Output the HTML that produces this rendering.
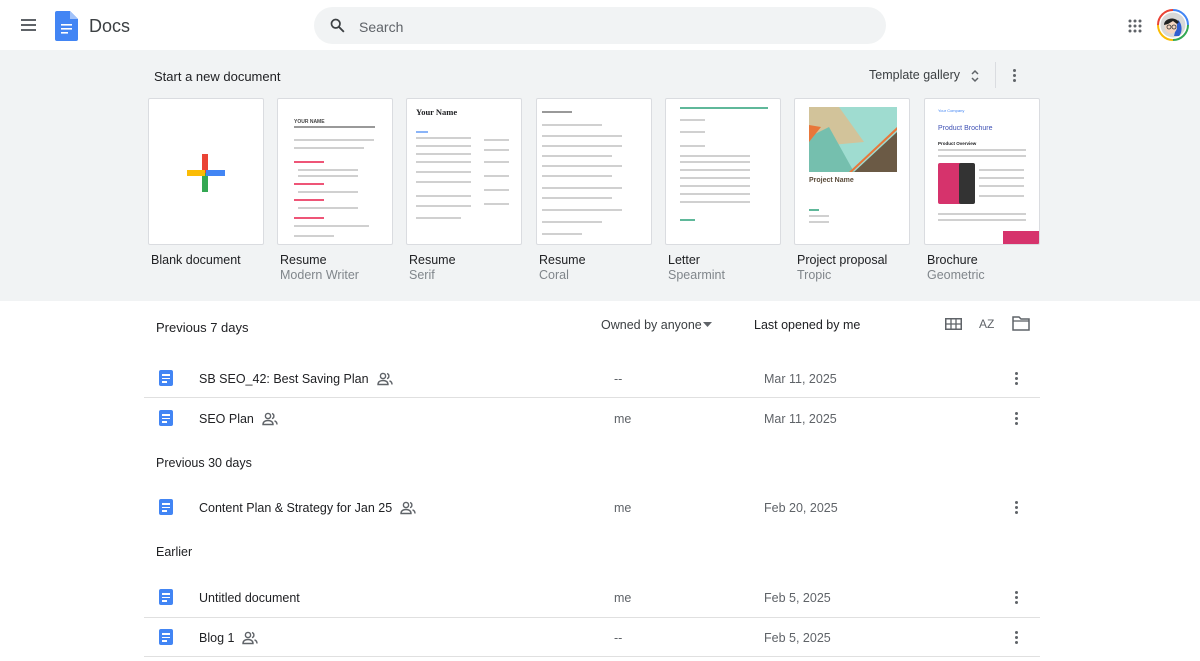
<!DOCTYPE html>
<html><head><meta charset="utf-8"><style>
*{box-sizing:border-box;margin:0;padding:0}
body{width:1200px;height:661px;overflow:hidden;background:#fff;font-family:"Liberation Sans",Arial,sans-serif;color:#202124;position:relative}
.a{position:absolute}
.band{left:0;top:50px;width:1200px;height:251px;background:#f1f3f4}
.card{position:absolute;top:98px;width:116px;height:147px;background:#fff;border:1px solid #dadce0;border-radius:2px;overflow:hidden}
.lbl{position:absolute;top:253px;font-size:12.5px;color:#202124}
.lbl span{display:block;color:#80868b;margin-top:1px}
.ln{position:absolute;height:1.5px;background:#d0d0d0}
.row{position:absolute;left:144px;width:896px;height:40px;font-size:12.5px}
.sep{position:absolute;left:144px;width:896px;height:1px;background:#e0e0e0}
.doc{position:absolute;left:15px;top:12px;width:14px;height:16px;background:#4285f4;border-radius:2px}
.doc i{position:absolute;left:3px;width:8px;height:1.5px;background:#fff}
.name{position:absolute;left:55px;top:14px}
.name svg{vertical-align:-3px;margin-left:8px}
.own{position:absolute;left:470px;top:14px;color:#5f6368}
.date{position:absolute;left:620px;top:14px;color:#5f6368}
.dots{position:absolute;left:871px;top:14px;width:3px}
.dots b{display:block;width:3px;height:3px;border-radius:50%;background:#5f6368;margin-bottom:2px}
.sec{position:absolute;left:156px;font-size:12.5px}
</style></head><body>
<svg width="0" height="0" style="position:absolute"><defs><symbol id="ppl" viewBox="0 0 16 14"><circle cx="6" cy="4" r="2.6" fill="none" stroke="#5f6368" stroke-width="1.4"/><path d="M1 12.5c0-3 2.5-4 5-4s5 1 5 4z" fill="none" stroke="#5f6368" stroke-width="1.4"/><path d="M10 1.6a2.6 2.6 0 0 1 0 5M12.5 8.8c1.5.6 2.5 1.6 2.5 3.7" fill="none" stroke="#5f6368" stroke-width="1.4"/></symbol></defs></svg>
<!-- header -->
<div class="a" style="left:21px;top:19px;width:15px">
<div style="height:2px;background:#5f6368;margin-bottom:3px"></div><div style="height:2px;background:#5f6368;margin-bottom:3px"></div><div style="height:2px;background:#5f6368"></div></div>
<svg class="a" style="left:55px;top:11px" width="23" height="30" viewBox="0 0 23 30"><path d="M2 0h13l8 8v20a2 2 0 0 1-2 2H2a2 2 0 0 1-2-2V2a2 2 0 0 1 2-2z" fill="#4285f4"/><path d="M15 0v8h8z" fill="#a1c2fa"/><rect x="6" y="13" width="11" height="1.6" fill="#fff"/><rect x="6" y="17" width="11" height="1.6" fill="#fff"/><rect x="6" y="21" width="7" height="1.6" fill="#fff"/></svg>
<div class="a" style="left:89px;top:16px;font-size:18px;color:#3c4043">Docs</div>
<div class="a" style="left:314px;top:7px;width:572px;height:37px;border-radius:19px;background:#f1f3f4"></div>
<svg class="a" style="left:329px;top:17px" width="17" height="17" viewBox="0 0 24 24"><circle cx="9.5" cy="9.5" r="6" fill="none" stroke="#3c4043" stroke-width="2.4"/><path d="M14 14l7 7" stroke="#3c4043" stroke-width="2.6"/></svg>
<div class="a" style="left:359px;top:19px;font-size:14px;color:#5f6368">Search</div>
<svg class="a" style="left:1128px;top:19px" width="14" height="14"><g fill="#5f6368"><circle cx="2" cy="2" r="1.5"/><circle cx="7" cy="2" r="1.5"/><circle cx="12" cy="2" r="1.5"/><circle cx="2" cy="7" r="1.5"/><circle cx="7" cy="7" r="1.5"/><circle cx="12" cy="7" r="1.5"/><circle cx="2" cy="12" r="1.5"/><circle cx="7" cy="12" r="1.5"/><circle cx="12" cy="12" r="1.5"/></g></svg>
<svg class="a" style="left:1157px;top:9px" width="32" height="32" viewBox="0 0 32 32"><path d="M16 1a15 15 0 0 1 15 15" stroke="#4285f4" stroke-width="2" fill="none"/><path d="M31 16a15 15 0 0 1-15 15" stroke="#34a853" stroke-width="2" fill="none"/><path d="M16 31A15 15 0 0 1 1 16" stroke="#fbbc05" stroke-width="2" fill="none"/><path d="M1 16A15 15 0 0 1 16 1" stroke="#ea4335" stroke-width="2" fill="none"/><circle cx="16" cy="16" r="12.5" fill="#d8d8d8"/><path d="M21 11c4 3 5 12 1 16h-5z" fill="#2f5fd0"/><ellipse cx="14" cy="18" rx="6" ry="6.5" fill="#f4d6c2"/><path d="M7 16c0-7 11-9 15-3l-2 2-4-3-5 3z" fill="#222"/><circle cx="12" cy="18" r="2" fill="none" stroke="#333" stroke-width=".8"/><circle cx="17" cy="18" r="2" fill="none" stroke="#333" stroke-width=".8"/></svg>
<!-- band -->
<div class="a band"></div>
<div class="a" style="left:154px;top:69px;font-size:13px">Start a new document</div>
<div class="a" style="left:869px;top:68px;font-size:12.5px;color:#3c4043">Template gallery</div>
<svg class="a" style="left:970px;top:68px" width="10" height="16"><path d="M2 6l3-3 3 3M2 10l3 3 3-3" stroke="#5f6368" stroke-width="1.5" fill="none"/></svg>
<div class="a" style="left:995px;top:62px;width:1px;height:26px;background:#dadce0"></div>
<div class="a dots" style="left:1013px;top:69px"><b></b><b></b><b></b></div>

<div class="card" style="left:148px"><div class="a" style="left:53px;top:55px;width:6px;height:19px;background:#ea4335"></div><div class="a" style="left:53px;top:74px;width:6px;height:19px;background:#34a853"></div><div class="a" style="left:38px;top:71px;width:18px;height:6px;background:#fbbc05"></div><div class="a" style="left:57px;top:71px;width:19px;height:6px;background:#4285f4"></div></div>
<div class="card" style="left:277px">
<div class="a" style="left:16px;top:20px;font-size:5px;font-weight:bold;color:#444">YOUR NAME</div><div class="ln" style="left:16px;top:27px;width:81px;background:#999"></div>
<div class="ln" style="left:16px;top:40px;width:80px"></div><div class="ln" style="left:16px;top:48px;width:70px"></div>
<div class="ln" style="left:16px;top:62px;width:30px;background:#e57"></div><div class="ln" style="left:20px;top:70px;width:60px"></div><div class="ln" style="left:20px;top:76px;width:60px"></div>
<div class="ln" style="left:16px;top:84px;width:30px;background:#e57"></div><div class="ln" style="left:20px;top:92px;width:60px"></div>
<div class="ln" style="left:16px;top:100px;width:30px;background:#e57"></div><div class="ln" style="left:20px;top:108px;width:60px"></div><div class="ln" style="left:16px;top:118px;width:30px;background:#e57"></div><div class="ln" style="left:16px;top:126px;width:75px"></div><div class="ln" style="left:16px;top:136px;width:40px"></div></div>
<div class="card" style="left:406px">
<div class="a" style="left:9px;top:8px;font-size:8.5px;font-weight:bold;font-family:'Liberation Serif',serif">Your Name</div>
<div class="ln" style="left:9px;top:32px;width:12px;background:#8ab4f8"></div>
<div class="ln" style="left:9px;top:38px;width:55px"></div><div class="ln" style="left:9px;top:46px;width:55px"></div><div class="ln" style="left:9px;top:54px;width:55px"></div><div class="ln" style="left:9px;top:62px;width:55px"></div><div class="ln" style="left:9px;top:72px;width:55px"></div><div class="ln" style="left:9px;top:82px;width:55px"></div><div class="ln" style="left:9px;top:96px;width:55px"></div><div class="ln" style="left:9px;top:106px;width:55px"></div><div class="ln" style="left:9px;top:118px;width:45px"></div>
<div class="ln" style="left:77px;top:40px;width:25px"></div><div class="ln" style="left:77px;top:50px;width:25px"></div><div class="ln" style="left:77px;top:62px;width:25px"></div><div class="ln" style="left:77px;top:76px;width:25px"></div><div class="ln" style="left:77px;top:90px;width:25px"></div><div class="ln" style="left:77px;top:104px;width:25px"></div></div>
<div class="card" style="left:536px">
<div class="ln" style="left:5px;top:12px;width:30px;background:#999"></div><div class="ln" style="left:5px;top:25px;width:60px"></div><div class="ln" style="left:5px;top:36px;width:80px"></div><div class="ln" style="left:5px;top:46px;width:80px"></div><div class="ln" style="left:5px;top:56px;width:70px"></div><div class="ln" style="left:5px;top:66px;width:80px"></div><div class="ln" style="left:5px;top:76px;width:70px"></div><div class="ln" style="left:5px;top:88px;width:80px"></div><div class="ln" style="left:5px;top:98px;width:70px"></div><div class="ln" style="left:5px;top:110px;width:80px"></div><div class="ln" style="left:5px;top:122px;width:60px"></div><div class="ln" style="left:5px;top:134px;width:40px"></div></div>
<div class="card" style="left:665px">
<div class="a" style="left:14px;top:8px;width:88px;height:2px;background:#5fb89a"></div>
<div class="ln" style="left:14px;top:20px;width:25px"></div><div class="ln" style="left:14px;top:32px;width:25px"></div><div class="ln" style="left:14px;top:46px;width:25px"></div><div class="ln" style="left:14px;top:56px;width:70px"></div><div class="ln" style="left:14px;top:62px;width:70px"></div><div class="ln" style="left:14px;top:70px;width:70px"></div><div class="ln" style="left:14px;top:78px;width:70px"></div><div class="ln" style="left:14px;top:86px;width:70px"></div><div class="ln" style="left:14px;top:94px;width:70px"></div><div class="ln" style="left:14px;top:102px;width:70px"></div><div class="ln" style="left:14px;top:120px;width:15px;background:#5fb89a"></div></div>
<div class="card" style="left:794px">
<svg class="a" style="left:14px;top:8px" width="88" height="65"><rect width="88" height="65" fill="#9fdcd0"/><polygon points="0,0 30,0 55,35 0,40" fill="#d2c39a"/><polygon points="0,30 20,20 45,65 0,65" fill="#75bfae"/><polygon points="0,18 12,20 0,35" fill="#e8773a"/><polygon points="88,25 88,65 45,65" fill="#6b5a45"/><polygon points="88,20 88,23 43,65 40,65" fill="#e8773a"/></svg>
<div class="a" style="left:14px;top:78px;font-size:7px;font-weight:bold;color:#5a4b3a">Project Name</div><div class="ln" style="left:14px;top:110px;width:10px;background:#5fb89a"></div><div class="ln" style="left:14px;top:116px;width:20px"></div><div class="ln" style="left:14px;top:122px;width:20px"></div></div>
<div class="card" style="left:924px">
<div class="a" style="left:13px;top:9px;font-size:4px;color:#4285f4">Your Company</div>
<div class="a" style="left:13px;top:26px;font-size:7px;color:#3f51b5">Product Brochure</div>
<div class="a" style="left:13px;top:42px;font-size:4.5px;font-weight:bold">Product Overview</div>
<div class="ln" style="left:13px;top:50px;width:88px"></div><div class="ln" style="left:13px;top:56px;width:88px"></div>
<div class="a" style="left:13px;top:64px;width:24px;height:41px;background:#d6336c;border-radius:2px"></div><div class="a" style="left:34px;top:64px;width:16px;height:41px;background:#333;border-radius:2px"></div>
<div class="ln" style="left:54px;top:70px;width:45px"></div><div class="ln" style="left:54px;top:78px;width:45px"></div><div class="ln" style="left:54px;top:86px;width:45px"></div><div class="ln" style="left:54px;top:96px;width:45px"></div><div class="ln" style="left:13px;top:114px;width:88px"></div><div class="ln" style="left:13px;top:120px;width:88px"></div>
<div class="a" style="left:78px;top:132px;width:38px;height:15px;background:#d6336c"></div><div class="a" style="left:0;top:145px;width:116px;height:2px;background:#7b7fc0"></div></div>

<div class="lbl" style="left:151px">Blank document</div>
<div class="lbl" style="left:280px">Resume<span>Modern Writer</span></div>
<div class="lbl" style="left:409px">Resume<span>Serif</span></div>
<div class="lbl" style="left:539px">Resume<span>Coral</span></div>
<div class="lbl" style="left:668px">Letter<span>Spearmint</span></div>
<div class="lbl" style="left:797px">Project proposal<span>Tropic</span></div>
<div class="lbl" style="left:927px">Brochure<span>Geometric</span></div>

<!-- list -->
<div class="a" style="left:156px;top:320px;font-size:13px">Previous 7 days</div>
<div class="a" style="left:601px;top:318px;font-size:12.5px;color:#3c4043">Owned by anyone</div>
<svg class="a" style="left:703px;top:322px" width="10" height="6"><path d="M0 0h9l-4.5 5z" fill="#5f6368"/></svg>
<div class="a" style="left:754px;top:318px;font-size:12.5px">Last opened by me</div>
<svg class="a" style="left:945px;top:318px" width="17" height="12"><rect x=".75" y=".75" width="15.5" height="10.5" fill="none" stroke="#5f6368" stroke-width="1.5"/><path d="M1 6h15M6 1v10M11 1v10" stroke="#5f6368" stroke-width="1.3"/></svg>
<div class="a" style="left:979px;top:317px;font-size:12px;color:#5f6368">AZ</div>
<svg class="a" style="left:1012px;top:316px" width="18" height="15"><path d="M1 1h6l2 2h8v11H1z" fill="none" stroke="#5f6368" stroke-width="1.5"/><path d="M1 5h16" stroke="#5f6368" stroke-width="1.3"/></svg>

<div class="row" style="top:358px"><div class="doc"><i style="top:4px"></i><i style="top:7.5px"></i><i style="top:11px;width:5px"></i></div><div class="name">SB SEO_42: Best Saving Plan<svg width="16" height="14"><use href="#ppl"/></svg></div><div class="own">--</div><div class="date">Mar 11, 2025</div><div class="dots"><b></b><b></b><b></b></div></div>
<div class="sep" style="top:397px"></div>
<div class="row" style="top:398px"><div class="doc"><i style="top:4px"></i><i style="top:7.5px"></i><i style="top:11px;width:5px"></i></div><div class="name">SEO Plan<svg width="16" height="14"><use href="#ppl"/></svg></div><div class="own">me</div><div class="date">Mar 11, 2025</div><div class="dots"><b></b><b></b><b></b></div></div>
<div class="sec" style="top:456px">Previous 30 days</div>
<div class="row" style="top:487px"><div class="doc"><i style="top:4px"></i><i style="top:7.5px"></i><i style="top:11px;width:5px"></i></div><div class="name">Content Plan &amp; Strategy for Jan 25<svg width="16" height="14"><use href="#ppl"/></svg></div><div class="own">me</div><div class="date">Feb 20, 2025</div><div class="dots"><b></b><b></b><b></b></div></div>
<div class="sec" style="top:545px">Earlier</div>
<div class="row" style="top:577px"><div class="doc"><i style="top:4px"></i><i style="top:7.5px"></i><i style="top:11px;width:5px"></i></div><div class="name">Untitled document</div><div class="own">me</div><div class="date">Feb 5, 2025</div><div class="dots"><b></b><b></b><b></b></div></div>
<div class="sep" style="top:617px"></div>
<div class="row" style="top:617px"><div class="doc"><i style="top:4px"></i><i style="top:7.5px"></i><i style="top:11px;width:5px"></i></div><div class="name">Blog 1<svg width="16" height="14"><use href="#ppl"/></svg></div><div class="own">--</div><div class="date">Feb 5, 2025</div><div class="dots"><b></b><b></b><b></b></div></div>
<div class="sep" style="top:656px"></div>
</body></html>
